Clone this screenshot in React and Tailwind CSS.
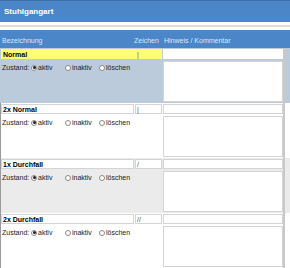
const rows = [
  { name: 'Normal', sign: '|', bg: 'bg-[#bccbdb]', active: true },
  { name: '2x Normal', sign: '|', bg: 'bg-white' },
  { name: '1x Durchfall', sign: '/', bg: 'bg-[#ebebeb]' },
  { name: '2x Durchfall', sign: '//', bg: 'bg-white' },
];

const Radio = ({ checked, label }) => (
  <span className="flex items-center gap-[1px]">
    <span className="w-[6px] h-[6px] rounded-full border border-[#8a8a8a] bg-white flex items-center justify-center">
      {checked && <span className="w-[3px] h-[3px] rounded-full bg-[#222]" />}
    </span>
    <span>{label}</span>
  </span>
);

const Row = ({ row }) => {
  const box = row.active ? 'border-transparent' : 'border-[#d4d4d4] bg-white';

  return (
    <div className={`flex h-[55px] ${row.bg}`}>
      <div className={`w-[1px] ${row.active ? 'bg-transparent' : 'bg-[#9a9a9a]'}`} />
      <div className="w-[161px] pt-[1px]">
        <div className={`flex h-[10px] ${row.active ? 'bg-[#ffff70]' : ''}`}>
          <div className={`w-[133px] h-full border ${box} flex items-center px-[1px] font-bold text-black leading-none`}>
            {row.name}
          </div>
          <div className={`w-[27px] ml-[1px] h-full border ${box} flex items-center px-[1px] text-[#555] leading-none`}>
            {row.sign}
          </div>
        </div>
        <div className="flex items-center mt-[5px] pl-[1px] text-[#222] leading-none">
          <span className="w-[29px]">Zustand:</span>
          <span className="w-[34px]"><Radio checked label="aktiv" /></span>
          <span className="w-[34px]"><Radio label="inaktiv" /></span>
          <Radio label="löschen" />
        </div>
      </div>
      <div className="w-[120px] ml-[1px] pt-[1px]">
        <div className={`h-[10px] border ${row.active ? 'border-white' : 'border-[#d4d4d4]'} bg-white`} />
        <div className="h-[41px] mt-[2px] border border-[#d4d4d4] bg-white" />
      </div>
      <div className="w-[2px] bg-[#c8c8c8]" />
    </div>
  );
};

export default function App() {
  return (
    <div className="w-[290px] h-[268px] overflow-hidden bg-white text-[7px]" style={{ fontFamily: '"Liberation Sans", Arial, sans-serif' }}>
      <div className="h-[22px] bg-[#4a86c8] border-t border-[#3d70a8] flex items-center px-[4px] text-white font-bold text-[8px]">
        Stuhlgangart
      </div>
      <div className="h-[3px] bg-white" />
      <div className="h-[2px] bg-[#dcdcdc]" />
      <div className="h-[3px] bg-white" />
      <div className="h-[18px] bg-[#4a86c8] flex items-end pb-[4px] text-[#dce8f6] leading-none">
        <span className="w-[134px] pl-[2px]">Bezeichnung</span>
        <span className="w-[30px]">Zeichen</span>
        <span>Hinweis / Kommentar</span>
      </div>
      {rows.map((row) => (
        <Row key={row.name} row={row} />
      ))}
    </div>
  );
}
